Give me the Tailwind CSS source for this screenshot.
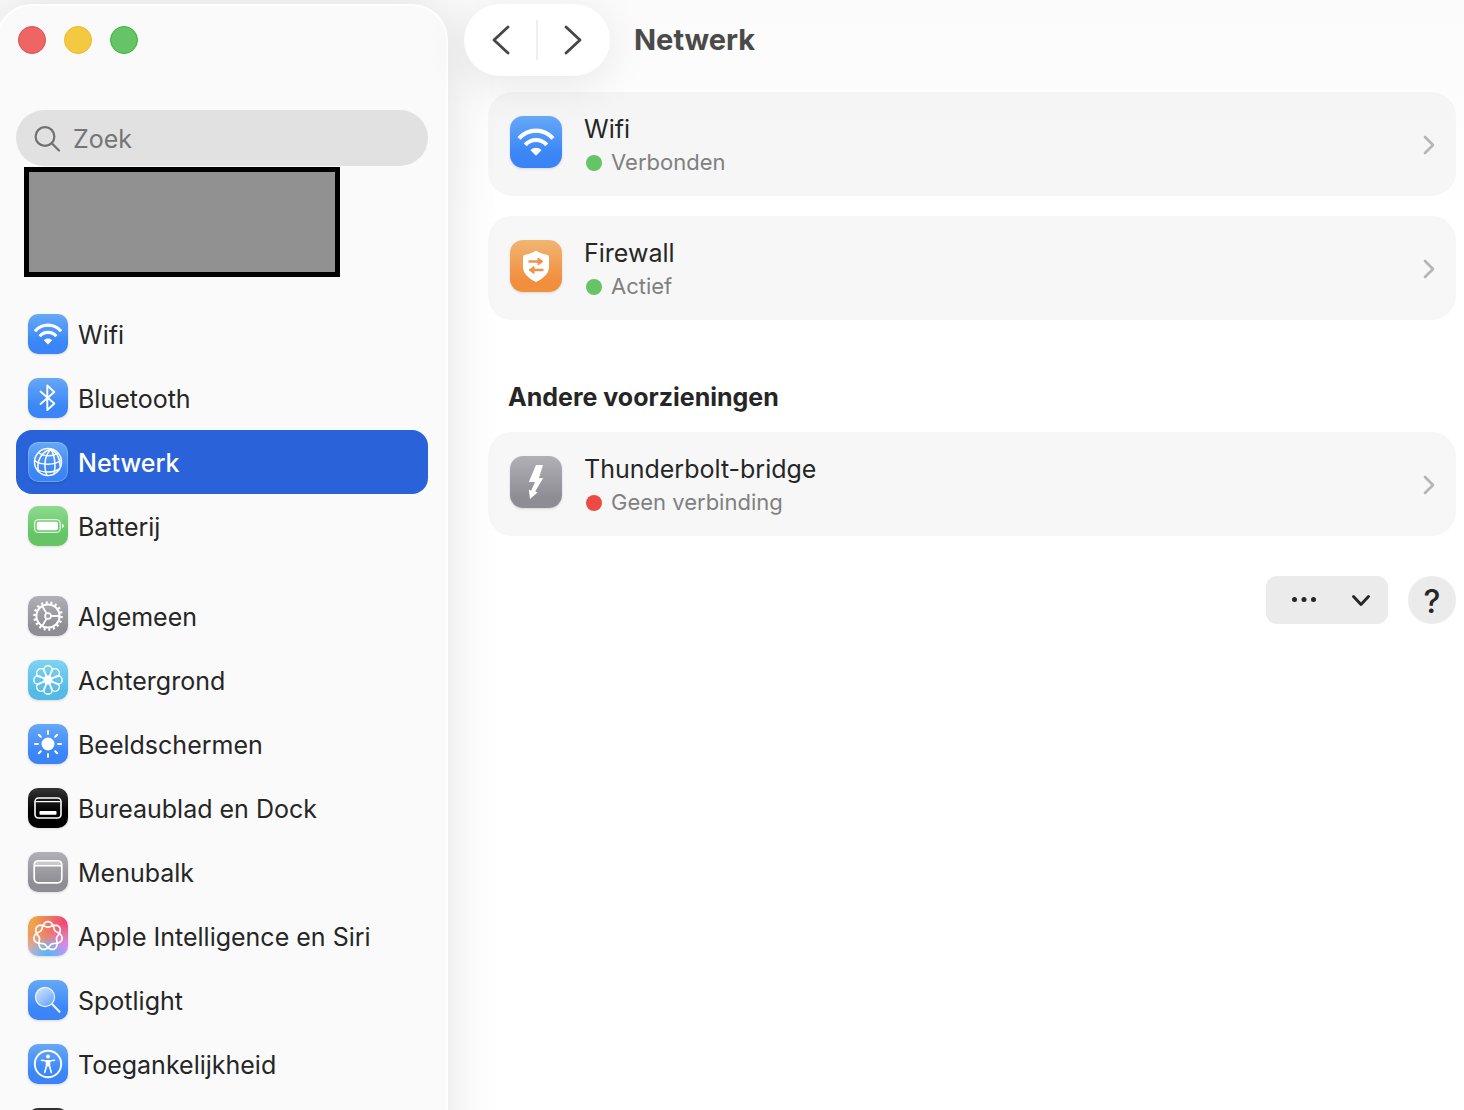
<!DOCTYPE html>
<html lang="nl">
<head>
    <meta charset="UTF-8">
    <meta name="viewport" content="width=device-width, initial-scale=1.0">
    <title>Netwerk</title>
    <script src="https://cdn.jsdelivr.net/npm/@tailwindcss/browser@4"></script>
</head>
<body class="h-screen overflow-hidden flex bg-linear-to-b from-[#fbfbfb] to-white to-20% font-[Inter,sans-serif] text-[#262626]">
    <!-- Sidebar -->
    <aside class="w-[452px] shrink-0 -ml-1 mt-1 -mb-16 pl-5 pr-5 rounded-t-[36px] border-2 border-b-0 border-white bg-[#fafafa] shadow-[0_0_52px_rgba(0,0,0,0.12)] overflow-hidden">
        <div class="flex gap-[18px] pt-5 -mx-[2px] pl-[2px]">
            <button aria-label="Sluit" class="size-7 rounded-full bg-[#ee6664] border border-[#e8474a]"></button>
            <button aria-label="Minimaliseer" class="size-7 rounded-full bg-[#f3c944] border border-[#efba1f]"></button>
            <button aria-label="Vergroot" class="size-7 rounded-full bg-[#64c466] border border-[#3fb342]"></button>
        </div>

        <label class="flex items-center h-14 mt-14 -mx-[2px] px-[18px] gap-3 rounded-full bg-[#e1e1e1]">
            <svg class="size-[27px] shrink-0" viewBox="0 0 27 27" fill="none" stroke="#707070" stroke-width="2.2" stroke-linecap="round">
                <circle cx="11" cy="11.500" r="9.400"/><path d="M18 18.500l7 7"/>
            </svg>
            <input type="text" aria-label="Zoek" placeholder="Zoek" class="w-full pt-[3px] bg-transparent outline-none text-[25px] placeholder:text-[#757575]">
        </label>
        <div class="w-[316px] h-[110px] mt-px ml-[6px] border-5 border-black bg-[#919191]"></div>

        <nav class="mt-[25px] -mx-[2px] text-[25px] whitespace-nowrap">
            <a href="#" class="flex items-center h-16 px-3 gap-[10px]">
                <svg class="size-10 rounded-[10px] shadow-sm" viewBox="0 0 40 40" fill="none">
                    <rect width="40" height="40" fill="url(#blue)"/>
                    <use href="#wifi"/>
                </svg>
                <span class="pt-[3px]">Wifi</span>
            </a>
            <a href="#" class="flex items-center h-16 px-3 gap-[10px]">
                <svg class="size-10 rounded-[10px] shadow-sm" viewBox="0 0 40 40" fill="none">
                    <rect width="40" height="40" fill="url(#blue)"/>
                    <path d="M12.500 13.500L26.300 25.500L19.300 32V7.500L26.300 14L12.500 26" stroke="#fff" stroke-width="1.900" stroke-linejoin="round" stroke-linecap="round"/>
                </svg>
                <span class="pt-[3px]">Bluetooth</span>
            </a>
            <a href="#" aria-current="page" class="flex items-center h-16 px-3 gap-[10px] rounded-2xl bg-[#2962d9] text-white font-medium">
                <svg class="size-10 rounded-[10px] shadow-sm" viewBox="0 0 40 40" fill="none">
                    <rect width="40" height="40" fill="url(#blue)"/>
                    <rect x=".5" y=".5" width="39" height="39" rx="9.500" stroke="#fff" stroke-opacity=".25"/>
                    <g stroke="#fff" stroke-width="1.500" stroke-linecap="round">
                        <circle cx="20" cy="20" r="13.500"/>
                        <path d="M23 7C14 10 8 18 10.500 29.500M23 7C17 13 15 24 19 33.500M23 7C26 12 28.500 22 26 32M23 7C29 10 32 16 32.300 25"/>
                        <path d="M10.500 10.500C14 14 24 15.500 30 11M6.500 18.500C13 23.500 27 23.500 33.500 18M8.500 27C14 31 25 31 31.500 27"/>
                    </g>
                </svg>
                <span class="pt-[3px]">Netwerk</span>
            </a>
            <a href="#" class="flex items-center h-16 px-3 gap-[10px]">
                <svg class="size-10 rounded-[10px] shadow-sm" viewBox="0 0 40 40" fill="none">
                    <rect width="40" height="40" fill="url(#green)"/>
                    <rect x="6.600" y="13.600" width="25.600" height="12.800" rx="4" stroke="#fff" stroke-opacity=".8" stroke-width="1.300"/>
                    <rect x="8.800" y="15.800" width="21.200" height="8.400" rx="2" fill="#fff"/>
                    <path d="M34 17.800c2.400.7 2.400 3.700 0 4.400z" fill="#fff"/>
                </svg>
                <span class="pt-[3px]">Batterij</span>
            </a>

            <a href="#" class="flex items-center h-16 px-3 gap-[10px] mt-[26px]">
                <svg class="size-10 rounded-[10px] shadow-sm" viewBox="0 0 40 40" fill="none">
                    <rect width="40" height="40" fill="url(#gray)"/>
                    <g stroke="#fff">
                        <circle cx="20" cy="20" r="11.600" stroke-width="2"/>
                        <circle cx="20" cy="20" r="13.500" stroke-width="2.600" pathLength="72" stroke-dasharray="1.800 2.200"/>
                        <circle cx="20" cy="20" r="2.900" stroke-width="1.800"/>
                        <path d="M23 20h9M18.500 17.400L14 9.600M18.500 22.600L14 30.400" stroke-width="1.900"/>
                    </g>
                </svg>
                <span class="pt-[3px]">Algemeen</span>
            </a>
            <a href="#" class="flex items-center h-16 px-3 gap-[10px]">
                <svg class="size-10 rounded-[10px] shadow-sm" viewBox="0 0 40 40" fill="none">
                    <rect width="40" height="40" fill="url(#cyan)"/>
                    <g stroke="#fff" stroke-width="1.400">
                        <g id="petals">
                            <path d="M20 18.300C18.600 14.500 15.800 13 15.800 10a4.200 4.200 0 0 1 8.400 0C24.200 13 21.400 14.500 20 18.300z"/>
                            <path d="M20 18.300C18.600 14.500 15.800 13 15.800 10a4.200 4.200 0 0 1 8.400 0C24.200 13 21.400 14.500 20 18.300z" transform="rotate(45 20 20)"/>
                        </g>
                        <use href="#petals" transform="rotate(90 20 20)"/>
                        <use href="#petals" transform="rotate(180 20 20)"/>
                        <use href="#petals" transform="rotate(270 20 20)"/>
                        <circle cx="20" cy="20" r="3.800" stroke-opacity=".8"/>
                    </g>
                    <circle cx="20" cy="20" r="1.700" fill="#fff"/>
                </svg>
                <span class="pt-[3px]">Achtergrond</span>
            </a>
            <a href="#" class="flex items-center h-16 px-3 gap-[10px]">
                <svg class="size-10 rounded-[10px] shadow-sm" viewBox="0 0 40 40" fill="none">
                    <rect width="40" height="40" fill="url(#blue)"/>
                    <circle cx="20" cy="20" r="6.500" fill="#fff"/>
                    <path d="M20 7v3M20 30v3M7 20h3M30 20h3M10.800 10.800l2 2M27.200 27.200l2 2M10.800 29.200l2-2M27.200 12.800l2-2" stroke="#fff" stroke-width="2" stroke-linecap="round"/>
                </svg>
                <span class="pt-[3px]">Beeldschermen</span>
            </a>
            <a href="#" class="flex items-center h-16 px-3 gap-[10px]">
                <svg class="size-10 rounded-[10px] shadow-sm" viewBox="0 0 40 40" fill="none">
                    <rect width="40" height="40" fill="url(#black)"/>
                    <rect x="7" y="10" width="26" height="20" rx="3.500" stroke="#fff" stroke-width="1.600"/>
                    <path d="M7.500 13.700h25" stroke="#fff" stroke-width="1.300"/>
                    <rect x="11.500" y="23" width="17" height="3.800" rx=".8" fill="#fff"/>
                </svg>
                <span class="pt-[3px]">Bureaublad en Dock</span>
            </a>
            <a href="#" class="flex items-center h-16 px-3 gap-[10px]">
                <svg class="size-10 rounded-[10px] shadow-sm" viewBox="0 0 40 40" fill="none">
                    <rect width="40" height="40" fill="url(#gray)"/>
                    <rect x="6.200" y="8.800" width="27.600" height="22" rx="4" stroke="#fff" stroke-width="1.700"/>
                    <path d="M7 11.500h26" stroke="#fff" stroke-opacity=".4" stroke-width="3"/>
                    <path d="M7 13.700h26" stroke="#fff" stroke-width="1.500"/>
                </svg>
                <span class="pt-[3px]">Menubalk</span>
            </a>
            <a href="#" class="flex items-center h-16 px-3 gap-[10px]">
                <span class="size-10 rounded-[10px] shadow-sm bg-[radial-gradient(circle_at_50%_105%,#45b5ff_0%,transparent_48%),radial-gradient(circle_at_100%_85%,#d58bff_0%,transparent_50%),radial-gradient(circle_at_95%_15%,#f0427c_0%,transparent_65%),linear-gradient(180deg,#f2a83e_0%,#ee9a62_50%,#c9b9d8_100%)]">
                    <svg class="size-10" viewBox="0 0 40 40" fill="none">
                        <path id="siriKnot" stroke="#fff" stroke-width="1.700" stroke-linejoin="round"/>
                    </svg>
                </span>
                <span class="pt-[3px]">Apple Intelligence en Siri</span>
            </a>
            <a href="#" class="flex items-center h-16 px-3 gap-[10px]">
                <svg class="size-10 rounded-[10px] shadow-sm" viewBox="0 0 40 40" fill="none">
                    <rect width="40" height="40" fill="url(#blue)"/>
                    <path d="M24.500 24.500l7 7.300" stroke="#fff" stroke-opacity=".9" stroke-width="2.200" stroke-linecap="round"/>
                    <circle cx="17" cy="17" r="9.600" fill="url(#lens)" stroke="#fff" stroke-opacity=".85" stroke-width="1.200"/>
                </svg>
                <span class="pt-[3px]">Spotlight</span>
            </a>
            <a href="#" class="flex items-center h-16 px-3 gap-[10px]">
                <svg class="size-10 rounded-[10px] shadow-sm" viewBox="0 0 40 40" fill="none">
                    <rect width="40" height="40" fill="url(#blue)"/>
                    <circle cx="20" cy="20" r="13.200" stroke="#fff" stroke-width="1.900"/>
                    <circle cx="20" cy="12.500" r="2" fill="#fff"/>
                    <path d="M13.500 16.200l5 .8v5L16.700 28.500M26.500 16.200l-5 .8v5l1.800 6.500" stroke="#fff" stroke-width="1.600" stroke-linecap="round" stroke-linejoin="round"/>
                    <path d="M18 16h4v6.500h-4z" fill="#fff"/>
                </svg>
                <span class="pt-[3px]">Toegankelijkheid</span>
            </a>
            <a href="#" aria-label="Volgende" class="flex items-center h-16 px-3 gap-[10px]">
                <svg class="size-10 rounded-[10px] shadow-sm" viewBox="0 0 40 40"><rect width="40" height="40" fill="url(#black)"/></svg>
            </a>
        </nav>
    </aside>

    <!-- Content -->
    <main class="flex-1 min-w-0 pt-1 pr-2 pl-4">
        <header class="flex items-center gap-6">
            <div class="flex items-center w-[146px] h-[72px] rounded-full bg-white shadow-[0_8px_44px_rgba(0,0,0,0.09)]">
                <button aria-label="Terug" class="flex-1 h-full flex items-center justify-center">
                    <svg class="w-5 h-8" viewBox="0 0 20 32" fill="none" stroke="#464646" stroke-width="2.800" stroke-linecap="round" stroke-linejoin="round"><path d="M18 3L4 16l14 13"/></svg>
                </button>
                <div class="w-[2px] h-10 bg-[#efefef]"></div>
                <button aria-label="Vooruit" class="flex-1 h-full flex items-center justify-center">
                    <svg class="w-5 h-8" viewBox="0 0 20 32" fill="none" stroke="#464646" stroke-width="2.800" stroke-linecap="round" stroke-linejoin="round"><path d="M2 3l14 13L2 29"/></svg>
                </button>
            </div>
            <h1 class="text-[29px] font-bold text-[#4a4a4a]">Netwerk</h1>
        </header>

        <div class="pl-6 pt-4">
            <a href="#" class="flex items-start h-[104px] pt-[21px] pl-[22px] pr-[20px] gap-[22px] rounded-3xl bg-black/[0.032]">
                <svg class="size-[52px] mt-[3px] rounded-[13px] shadow-sm" viewBox="0 0 40 40" fill="none">
                    <rect width="40" height="40" fill="url(#blue)"/>
                    <use href="#wifi"/>
                </svg>
                <div class="flex-1">
                    <div class="text-[25px] leading-[33px]">Wifi</div>
                    <div class="flex items-center gap-[9px] pl-[2px] text-[22px] leading-[33px] text-[#808080]"><span class="size-4 rounded-full bg-[#64c466]"></span>Verbonden</div>
                </div>
                <svg class="w-[14px] h-5 mt-[22px]" viewBox="0 0 14 20" fill="none" stroke="#b5b5b5" stroke-width="2.600" stroke-linecap="round" stroke-linejoin="round"><path d="M3 2l8 8-8 8"/></svg>
            </a>
            <a href="#" class="flex items-start h-[104px] mt-5 pt-[21px] pl-[22px] pr-[20px] gap-[22px] rounded-3xl bg-black/[0.032]">
                <svg class="size-[52px] mt-[3px] rounded-[13px] shadow-sm" viewBox="0 0 52 52" fill="none">
                    <rect width="52" height="52" fill="url(#orange)"/>
                    <path d="M26 10.500C29.500 13 33 14.200 37 14.800q2 .4 2 2.500V27c0 7-6 11.500-13 15c-7-3.500-13-8-13-15v-9.700q0-2.100 2-2.500C19 14.200 22.500 13 26 10.500z" fill="#fff"/>
                    <path d="M19.500 21.500h10M32.500 30h-10" stroke="#f0934a" stroke-width="2.400" stroke-linecap="round"/>
                    <path d="M28 18l5 3.500-5 3.500zM24 26.500L19 30l5 3.500z" fill="#f0934a" stroke="#f0934a" stroke-linejoin="round"/>
                </svg>
                <div class="flex-1">
                    <div class="text-[25px] leading-[33px]">Firewall</div>
                    <div class="flex items-center gap-[9px] pl-[2px] text-[22px] leading-[33px] text-[#808080]"><span class="size-4 rounded-full bg-[#64c466]"></span>Actief</div>
                </div>
                <svg class="w-[14px] h-5 mt-[22px]" viewBox="0 0 14 20" fill="none" stroke="#b5b5b5" stroke-width="2.600" stroke-linecap="round" stroke-linejoin="round"><path d="M3 2l8 8-8 8"/></svg>
            </a>

            <h2 class="mt-[60px] pl-5 text-[25px] leading-[34px] font-bold">Andere voorzieningen</h2>
            <a href="#" class="flex items-start h-[104px] mt-[18px] pt-[21px] pl-[22px] pr-[20px] gap-[22px] rounded-3xl bg-black/[0.032]">
                <svg class="size-[52px] mt-[3px] rounded-[13px] shadow-sm" viewBox="0 0 52 52" fill="none">
                    <rect width="52" height="52" fill="url(#gray)"/>
                    <path d="M26 9h7l-4 13h4.200L25.300 35.300l2.200 1.200L20 43l-1.200-9.500 2.400 1.200L25 26h-6.200z" fill="#fff"/>
                </svg>
                <div class="flex-1">
                    <div class="text-[25px] leading-[33px]">Thunderbolt-bridge</div>
                    <div class="flex items-center gap-[9px] pl-[2px] text-[22px] leading-[33px] text-[#808080]"><span class="size-4 rounded-full bg-[#ec4b45]"></span>Geen verbinding</div>
                </div>
                <svg class="w-[14px] h-5 mt-[22px]" viewBox="0 0 14 20" fill="none" stroke="#b5b5b5" stroke-width="2.600" stroke-linecap="round" stroke-linejoin="round"><path d="M3 2l8 8-8 8"/></svg>
            </a>

            <div class="flex justify-end gap-5 mt-10">
                <button aria-label="Meer opties" class="flex items-center justify-between w-[122px] h-12 pl-[25px] pr-[17px] rounded-[11px] bg-[#ebebeb]">
                    <svg class="w-[26px] h-6" viewBox="0 0 26 24" fill="#262626"><circle cx="3.500" cy="11.500" r="2.500"/><circle cx="13" cy="11.500" r="2.500"/><circle cx="22.500" cy="11.500" r="2.500"/></svg>
                    <svg class="w-5 h-6" viewBox="0 0 20 24" fill="none" stroke="#262626" stroke-width="2.900" stroke-linecap="round" stroke-linejoin="round"><path d="M2.500 8.500L10 16.500l7.500-8"/></svg>
                </button>
                <button aria-label="Help" class="flex items-center justify-center size-12 pt-[3px] rounded-full bg-[#ebebeb] text-[32px] leading-8 font-medium">?</button>
            </div>
        </div>
    </main>

    <!-- Shared gradients and symbols -->
    <svg class="absolute size-0" aria-hidden="true">
        <defs>
            <linearGradient id="blue" x2="0" y2="1"><stop stop-color="#66a8f7"/><stop offset=".7" stop-color="#3b87f7"/><stop offset="1" stop-color="#3b83f7"/></linearGradient>
            <linearGradient id="green" x2="0" y2="1"><stop stop-color="#8ddb8e"/><stop offset=".7" stop-color="#65c466"/></linearGradient>
            <linearGradient id="gray" x2="0" y2="1"><stop stop-color="#b1b0b6"/><stop offset=".8" stop-color="#8e8d93"/></linearGradient>
            <linearGradient id="cyan" x2="0" y2="1"><stop stop-color="#7ed3f2"/><stop offset=".8" stop-color="#55bbe4"/></linearGradient>
            <linearGradient id="black" x2="0" y2="1"><stop stop-color="#333"/><stop offset=".6" stop-color="#000"/></linearGradient>
            <linearGradient id="orange" x2="0" y2="1"><stop stop-color="#f2b571"/><stop offset=".75" stop-color="#f0903f"/></linearGradient>
            <linearGradient id="lens" x2="1" y2="1"><stop stop-color="#fff" stop-opacity=".75"/><stop offset="1" stop-color="#fff" stop-opacity=".15"/></linearGradient>
            <g id="wifi">
                <path d="M6.900 17.200C14 9.200 26 9.200 33.100 17.200M11.700 22.200C16.200 17.200 23.800 17.200 28.300 22.200" stroke="#fff" stroke-width="3.200"/>
                <path d="M20 30.600l-4.200-4.300c2.400-2.500 6-2.500 8.400 0z" fill="#fff"/>
            </g>
        </defs>
    </svg>

    <script>
        // Seven-lobed knot: radius swings 3.5 times per turn, so it closes after two turns
        let d = '';
        for (let i = 0; i <= 240; i++) {
            const t = i / 240 * 4 * Math.PI;
            const r = 11.6 + 2.8 * Math.cos(3.5 * t);
            d += (i ? 'L' : 'M') + (20 + r * Math.sin(t)).toFixed(2) + ' ' + (20 - r * Math.cos(t)).toFixed(2);
        }
        document.getElementById('siriKnot').setAttribute('d', d + 'z');
    </script>
</body>
</html>
